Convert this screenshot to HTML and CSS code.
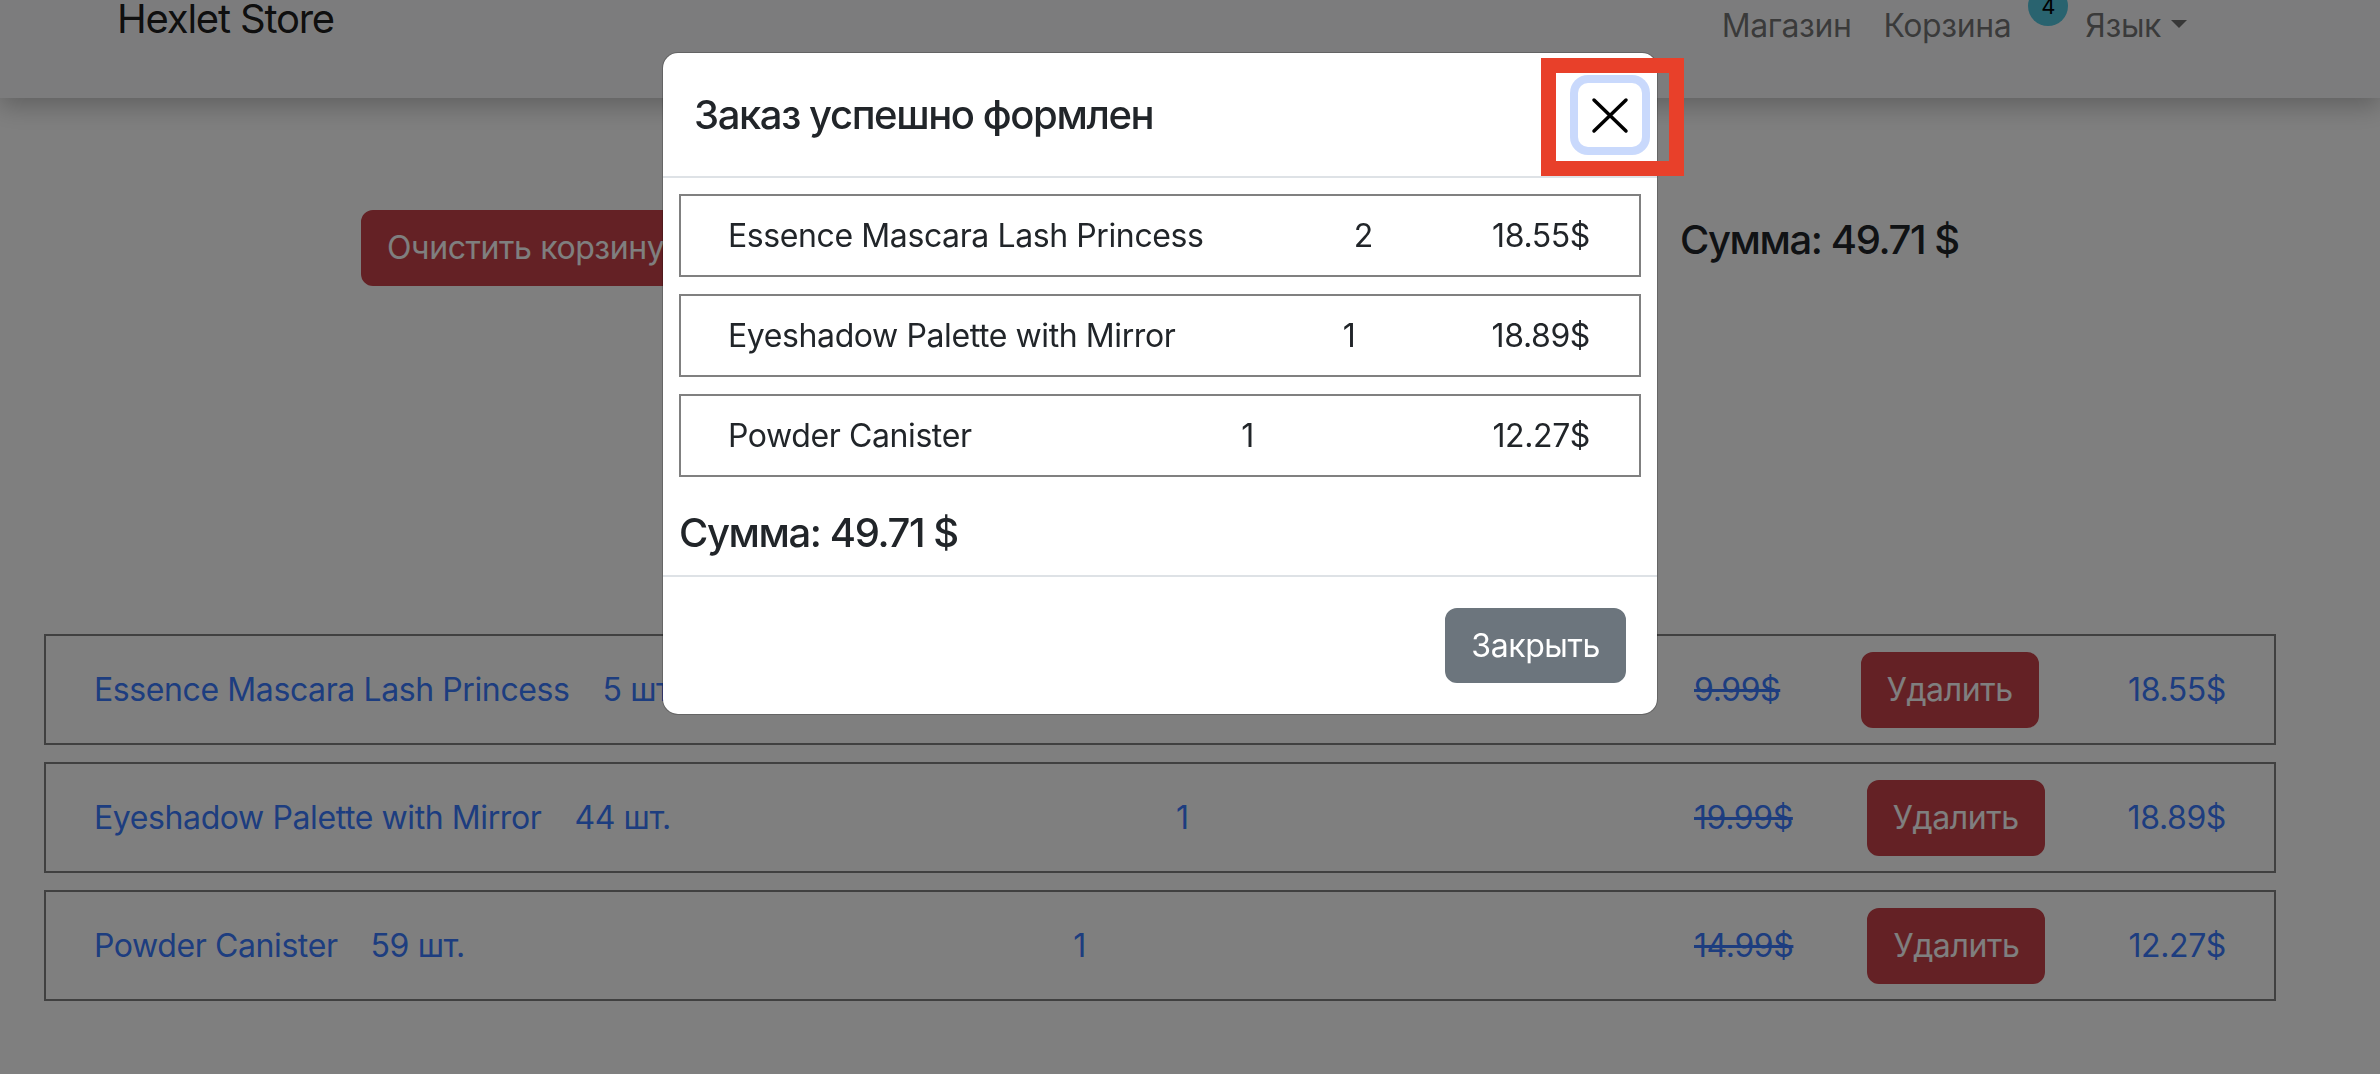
FILE: index.html
```html
<!DOCTYPE html>
<html lang="ru">
<head>
<meta charset="utf-8">
<title>Hexlet Store</title>
<link rel="stylesheet" href="styles.css">
</head>
<body>
<div class="page">
  <header class="navbar">
    <a class="brand" href="#">Hexlet Store</a>
    <nav class="nav">
      <a class="nav-link" href="#">Магазин</a>
      <a class="nav-link" href="#">Корзина</a>
      <span class="badge">4</span>
      <a class="nav-link dropdown-toggle" href="#">Язык</a>
    </nav>
  </header>

  <main class="container">
    <div class="summary-row">
      <button class="btn btn-danger clear-btn">Очистить корзину</button>
      <h4 class="total">Сумма: 49.71 $</h4>
    </div>

    <ul class="cart-list">
      <li class="cart-item">
        <div class="item-main"><a href="#">Essence Mascara Lash Princess</a><span class="stock">5 шт.</span></div>
        <span class="item-count">1</span>
        <div class="item-prices"><s class="old-price">9.99$</s><button class="btn btn-danger btn-delete">Удалить</button><span class="new-price">18.55$</span></div>
      </li>
      <li class="cart-item">
        <div class="item-main"><a href="#">Eyeshadow Palette with Mirror</a><span class="stock">44 шт.</span></div>
        <span class="item-count">1</span>
        <div class="item-prices"><s class="old-price">19.99$</s><button class="btn btn-danger btn-delete">Удалить</button><span class="new-price">18.89$</span></div>
      </li>
      <li class="cart-item">
        <div class="item-main"><a href="#">Powder Canister</a><span class="stock">59 шт.</span></div>
        <span class="item-count">1</span>
        <div class="item-prices"><s class="old-price">14.99$</s><button class="btn btn-danger btn-delete">Удалить</button><span class="new-price">12.27$</span></div>
      </li>
    </ul>
  </main>
</div>

<div class="backdrop"></div>

<div class="modal">
  <div class="modal-header">
    <h5 class="modal-title">Заказ успешно формлен</h5>
    <button class="btn-close" aria-label="Close">
      <svg width="64" height="64" viewBox="0 0 64 64"><path d="M16 17 L48 48 M48 17 L16 48" stroke="#000" stroke-width="3.5" stroke-linecap="round" fill="none"/></svg>
    </button>
  </div>
  <div class="modal-body">
    <div class="order-item"><span class="oi-name">Essence Mascara Lash Princess</span><span class="oi-qty">2</span><span class="oi-price">18.55$</span></div>
    <div class="order-item"><span class="oi-name">Eyeshadow Palette with Mirror</span><span class="oi-qty">1</span><span class="oi-price">18.89$</span></div>
    <div class="order-item"><span class="oi-name">Powder Canister</span><span class="oi-qty">1</span><span class="oi-price">12.27$</span></div>
    <h4 class="order-total">Сумма: 49.71 $</h4>
  </div>
  <div class="modal-footer">
    <button class="btn btn-secondary">Закрыть</button>
  </div>
</div>

<div class="highlight"></div>
</body>
</html>
```

FILE: styles.css
```css
html, body {
  margin: 0;
  padding: 0;
}

body {
  width: 2380px;
  height: 1074px;
  overflow: hidden;
  background: #fff;
  font-family: "Inter", "Liberation Sans", sans-serif;
  letter-spacing: -0.025em;
  color: #212529;
  position: relative;
}

.page {
  width: 2380px;
}

/* Navbar */
.navbar {
  height: 98px;
  box-sizing: border-box;
  background: #f8f9fa;
  box-shadow: 0 8px 24px rgba(0, 0, 0, 0.25);
  display: flex;
  justify-content: space-between;
  align-items: flex-start;
  padding: 0 177px 0 117px;
  position: relative;
}

.brand {
  font-size: 40px;
  line-height: 40px;
  letter-spacing: -0.03em;
  color: rgba(0, 0, 0, 0.9);
  text-decoration: none;
  margin-top: -1px;
}

.nav {
  display: flex;
  align-items: flex-start;
}

.nav-link {
  font-size: 32px;
  line-height: 48px;
  padding: 2px 16px 0;
  color: rgba(0, 0, 0, 0.55);
  text-decoration: none;
}

.badge {
  width: 40px;
  height: 40px;
  border-radius: 50%;
  background: #52c6df;
  color: #000;
  font-size: 22px;
  letter-spacing: 0;
  display: flex;
  align-items: center;
  justify-content: center;
  position: relative;
  top: -14px;
  margin: 0 1px;
}

.dropdown-toggle::after {
  content: "";
  display: inline-block;
  margin-left: 10px;
  vertical-align: 9px;
  border-top: 8px solid;
  border-left: 8px solid transparent;
  border-right: 8px solid transparent;
}

/* Main content */
.container {
  padding: 0 104px 0 44px;
}

.summary-row {
  display: grid;
  grid-template-columns: 1636px auto;
  align-items: start;
  margin-top: 112px;
}

.clear-btn {
  justify-self: start;
  margin-left: 317px;
}

.total {
  margin: 6px 0 0;
  font-size: 40px;
  line-height: 48px;
  font-weight: 500;
  letter-spacing: -0.035em;
}

.btn {
  font-family: inherit;
  letter-spacing: inherit;
  font-size: 32px;
  line-height: 48px;
  padding: 12px 24px;
  border: 2px solid transparent;
  border-radius: 12px;
  color: #fff;
  cursor: pointer;
}

.btn-danger {
  background: #c9434a;
  border-color: #c9434a;
}

.btn-secondary {
  background: #6c757d;
  border-color: #6c757d;
  line-height: 47px;
}

.cart-list {
  list-style: none;
  margin: 348px 0 0;
  padding: 0;
}

.cart-item {
  height: 111px;
  box-sizing: border-box;
  border: 2px solid #808080;
  padding: 0 48px;
  margin-bottom: 17px;
  display: flex;
  align-items: center;
  justify-content: space-between;
  font-size: 32px;
  color: #3b7bff;
}

.cart-item a {
  color: inherit;
  text-decoration: none;
}

.stock {
  margin-left: 33px;
}

.item-prices {
  width: 532px;
  display: flex;
  align-items: center;
  justify-content: space-between;
}

.btn-delete {
  margin-right: 9px;
}

/* Backdrop and modal */
.backdrop {
  position: fixed;
  inset: 0;
  background: rgba(0, 0, 0, 0.5);
}

.modal {
  position: absolute;
  left: 662px;
  top: 52px;
  width: 996px;
  box-sizing: border-box;
  background: #fff;
  background-clip: padding-box;
  border: 1px solid rgba(0, 0, 0, 0.2);
  border-radius: 16px;
  color: #212529;
}

.modal-header {
  height: 125px;
  box-sizing: border-box;
  border-bottom: 2px solid #dee2e6;
  display: flex;
  align-items: center;
  justify-content: space-between;
  padding: 0 15px 0 31px;
}

.modal-title {
  margin: 0;
  font-size: 40px;
  line-height: 60px;
  font-weight: 500;
  letter-spacing: -0.035em;
}

.btn-close {
  width: 64px;
  height: 64px;
  padding: 0;
  border: 0;
  border-radius: 10px;
  background: #fff;
  box-shadow: 0 0 0 8px #c9d9fc;
  display: flex;
  align-items: center;
  justify-content: center;
}

.modal-body {
  padding: 16px 16px 18px;
}

.order-item {
  height: 83px;
  box-sizing: border-box;
  border: 2px solid #808080;
  display: flex;
  align-items: center;
  justify-content: space-between;
  padding: 0 49px 0 47px;
  margin-bottom: 17px;
  font-size: 32px;
}

.order-item:last-of-type {
  margin-bottom: 0;
}

.oi-qty {
  padding-left: 31px;
}

.order-total {
  margin: 32px 0 0;
  font-size: 40px;
  line-height: 48px;
  font-weight: 500;
  letter-spacing: -0.035em;
}

.modal-footer {
  border-top: 2px solid #dee2e6;
  padding: 31px;
  display: flex;
  justify-content: flex-end;
}

/* Annotation frame */
.highlight {
  position: absolute;
  left: 1541px;
  top: 58px;
  width: 143px;
  height: 118px;
  box-sizing: border-box;
  border: 15px solid #e8402a;
}
```
